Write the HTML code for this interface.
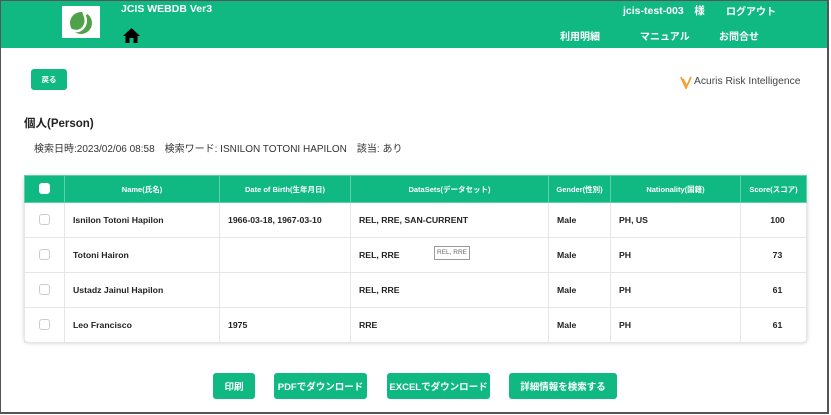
<!DOCTYPE html>
<html><head><meta charset="utf-8"><style>
*{margin:0;padding:0;box-sizing:border-box}
body{width:831px;height:415px;overflow:hidden;background:#fff;font-family:"Liberation Sans","Noto Sans CJK JP",sans-serif;position:relative;color:#222}
.frame{position:absolute;left:0;top:0;width:829px;height:414px;border:1px solid #555;border-right:2px solid #555;border-bottom:2px solid #555}
.hdr{position:absolute;left:1px;top:1px;width:826px;height:47px;background:#10b981}
.a{position:absolute;white-space:nowrap}
.w{color:#fff;font-weight:bold;font-size:10px}
.btn{position:absolute;background:#10b981;color:#fff;font-weight:bold;font-size:9.5px;border-radius:3px;display:flex;align-items:center;justify-content:center}
table{position:absolute;left:24px;top:175px;width:783px;border-collapse:collapse;font-size:8.7px}
td,th{border:1px solid #e6e6e6;height:35px}
th{background:#10b981;color:#fff;font-size:7.5px;height:27px;font-weight:bold;border-color:#5fd1a9}
td{font-weight:bold;color:#222;padding-left:8px}
.cb{display:inline-block;width:11px;height:11px;border:1px solid #ccc;border-radius:3px;background:#fff}
.shadow{position:absolute;left:24px;top:175px;width:783px;height:167px;border-radius:5px;box-shadow:0 1px 4px rgba(0,0,0,.2)}
</style></head><body>
<div class="hdr"></div>
<div class="a" style="left:62px;top:6px;width:38px;height:32px;background:#fff"></div>
<svg class="a" style="left:66px;top:8px" width="30" height="28" viewBox="0 0 30 28"><circle cx="15" cy="15" r="11" fill="#4fa14a"/><path d="M18 6 Q22 14 17 20 Q12 25 6 22" stroke="#fff" stroke-width="2.5" fill="none"/><circle cx="19" cy="5" r="2.5" fill="#fff"/></svg>
<div class="a w" style="left:121px;top:3px;font-size:10.5px">JCIS WEBDB Ver3</div>
<svg class="a" style="left:123px;top:27px" width="17" height="16" viewBox="0 0 17 16"><path d="M8.5 1 L17 9 H14.5 V16 H10.5 V11 H6.5 V16 H2.5 V9 H0 Z" fill="#000"/></svg>
<div class="a w" style="left:623px;top:3px;font-size:10.5px">jcis-test-003　様</div>
<div class="a w" style="left:726px;top:3px">ログアウト</div>
<div class="a w" style="left:560px;top:28px">利用明細</div>
<div class="a w" style="left:640px;top:28px">マニュアル</div>
<div class="a w" style="left:719px;top:28px">お問合せ</div>
<div class="btn" style="left:31px;top:69px;width:36px;height:21px;font-size:7.5px">戻る</div>
<svg class="a" style="left:680px;top:76px" width="12" height="13" viewBox="0 0 12 13"><path d="M1 1 L6 12 L11 1 M3 3 L6 9" stroke="#f0a030" stroke-width="1.8" fill="none"/></svg>
<div class="a" style="left:694px;top:76px;font-size:10.3px;color:#444">Acuris Risk Intelligence</div>
<div class="a" style="left:24px;top:115px;font-size:11.5px;font-weight:bold">個人(Person)</div>
<div class="a" style="left:34px;top:140px;font-size:10px;color:#333">検索日時:2023/02/06 08:58　検索ワード: ISNILON TOTONI HAPILON　該当: あり</div>
<div class="shadow"></div>
<table>
<tr><th style="width:40px"><span class="cb" style="border-color:#fff"></span></th><th style="width:155px">Name(氏名)</th><th style="width:131px">Date of Birth(生年月日)</th><th style="width:198px">DataSets(データセット)</th><th style="width:62px">Gender(性別)</th><th style="width:130px">Nationality(国籍)</th><th>Score(スコア)</th></tr>
<tr><td style="text-align:center;padding:0"><span class="cb"></span></td><td>Isnilon Totoni Hapilon</td><td>1966-03-18, 1967-03-10</td><td>REL, RRE, SAN-CURRENT</td><td>Male</td><td>PH, US</td><td style="text-align:center">100</td></tr>
<tr><td style="text-align:center;padding:0"><span class="cb"></span></td><td>Totoni Hairon</td><td></td><td>REL, RRE</td><td>Male</td><td>PH</td><td style="text-align:center">73</td></tr>
<tr><td style="text-align:center;padding:0"><span class="cb"></span></td><td>Ustadz Jainul Hapilon</td><td></td><td>REL, RRE</td><td>Male</td><td>PH</td><td style="text-align:center">61</td></tr>
<tr><td style="text-align:center;padding:0"><span class="cb"></span></td><td>Leo Francisco</td><td>1975</td><td>RRE</td><td>Male</td><td>PH</td><td style="text-align:center">61</td></tr>
</table>
<div class="a" style="left:434px;top:246px;width:36px;height:14px;border:1px solid #999;font-size:6.5px;color:#666;text-align:center;line-height:12px;background:#fff">REL, RRE</div>
<div class="btn" style="left:213px;top:373px;width:42px;height:26px">印刷</div>
<div class="btn" style="left:274px;top:373px;width:93px;height:26px">PDFでダウンロード</div>
<div class="btn" style="left:387px;top:373px;width:103px;height:26px">EXCELでダウンロード</div>
<div class="btn" style="left:509px;top:373px;width:108px;height:26px">詳細情報を検索する</div>
<div class="frame"></div>
</body></html>
